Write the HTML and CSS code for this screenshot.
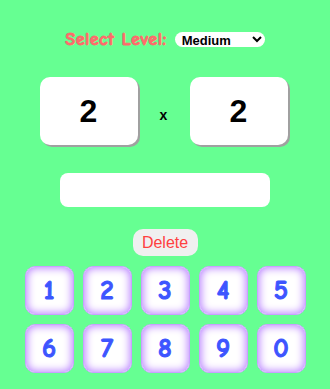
FILE: index.html
```html
<!DOCTYPE html>
<html>
<head>
<meta charset="utf-8">
<link rel="stylesheet" href="styles.css">
</head>
<body>
<div class="app">
  <div class="level-row">
    <label class="level-label" for="level">Select Level:</label>
    <select id="level" class="level-select">
      <option>Easy</option>
      <option selected>Medium</option>
      <option>Hard</option>
    </select>
  </div>
  <div class="problem">
    <div class="num-box">2</div>
    <div class="op">x</div>
    <div class="num-box">2</div>
  </div>
  <div class="answer"></div>
  <button class="delete">Delete</button>
  <div class="keypad">
    <button class="key">1</button>
    <button class="key">2</button>
    <button class="key">3</button>
    <button class="key">4</button>
    <button class="key">5</button>
    <button class="key">6</button>
    <button class="key">7</button>
    <button class="key">8</button>
    <button class="key">9</button>
    <button class="key">0</button>
  </div>
</div>
</body>
</html>
```

FILE: styles.css
```css
html, body {
  margin: 0;
  padding: 0;
  background: #66ff92;
  width: 330px;
  height: 389px;
  overflow: hidden;
}
.app {
  display: flex;
  flex-direction: column;
  align-items: center;
  font-family: "Liberation Sans", Arial, sans-serif;
}
.level-row {
  display: flex;
  align-items: center;
  gap: 8px;
  margin-top: 31px;
  height: 16px;
}
.level-label {
  font-family: "Comic Sans MS", "Comic Neue", cursive;
  font-weight: bold;
  font-size: 18px;
  letter-spacing: 0.5px;
  color: #ff6b6b;
  -webkit-text-stroke: 0.9px #ff6b6b;
}
.level-select {
  width: 90px;
  height: 15px;
  border: none;
  border-radius: 8px;
  background: #fff;
  font-family: "Liberation Sans", Arial, sans-serif;
  font-weight: bold;
  font-size: 13px;
  padding: 0 0 0 3px;
  color: #000;
}
.problem {
  display: flex;
  align-items: center;
  margin-top: 30px;
  margin-right: 3px;
}
.num-box {
  width: 98px;
  height: 68px;
  background: #fff;
  border-radius: 10px;
  box-shadow: 2px 2px 0 #a0a0a0;
  display: flex;
  align-items: center;
  justify-content: center;
  font-weight: bold;
  font-size: 32px;
  color: #000;
}
.op {
  width: 52px;
  text-align: center;
  font-weight: bold;
  font-size: 14px;
  margin-top: 7px;
}
.answer {
  width: 210px;
  height: 34px;
  background: #fff;
  border-radius: 8px;
  margin-top: 28px;
}
.delete {
  margin-top: 22px;
  width: 65px;
  height: 27px;
  border: none;
  border-radius: 10px;
  background: #f0f0f0;
  color: #ff4040;
  font-family: "Liberation Sans", Arial, sans-serif;
  font-size: 16px;
  padding: 0;
}
.keypad {
  margin-top: 10px;
  display: grid;
  grid-template-columns: repeat(5, 49px);
  grid-auto-rows: 49px;
  gap: 9px;
}
.key {
  border: 1px solid #c9a0ff;
  border-radius: 10px;
  background: #fff;
  box-shadow: inset 0 0 8px 1px #b57aff;
  font-family: "Comic Sans MS", "Comic Neue", cursive;
  font-weight: bold;
  font-size: 27px;
  color: #3d55ff;
  -webkit-text-stroke: 1px #3d55ff;
  padding: 0;
}
```
